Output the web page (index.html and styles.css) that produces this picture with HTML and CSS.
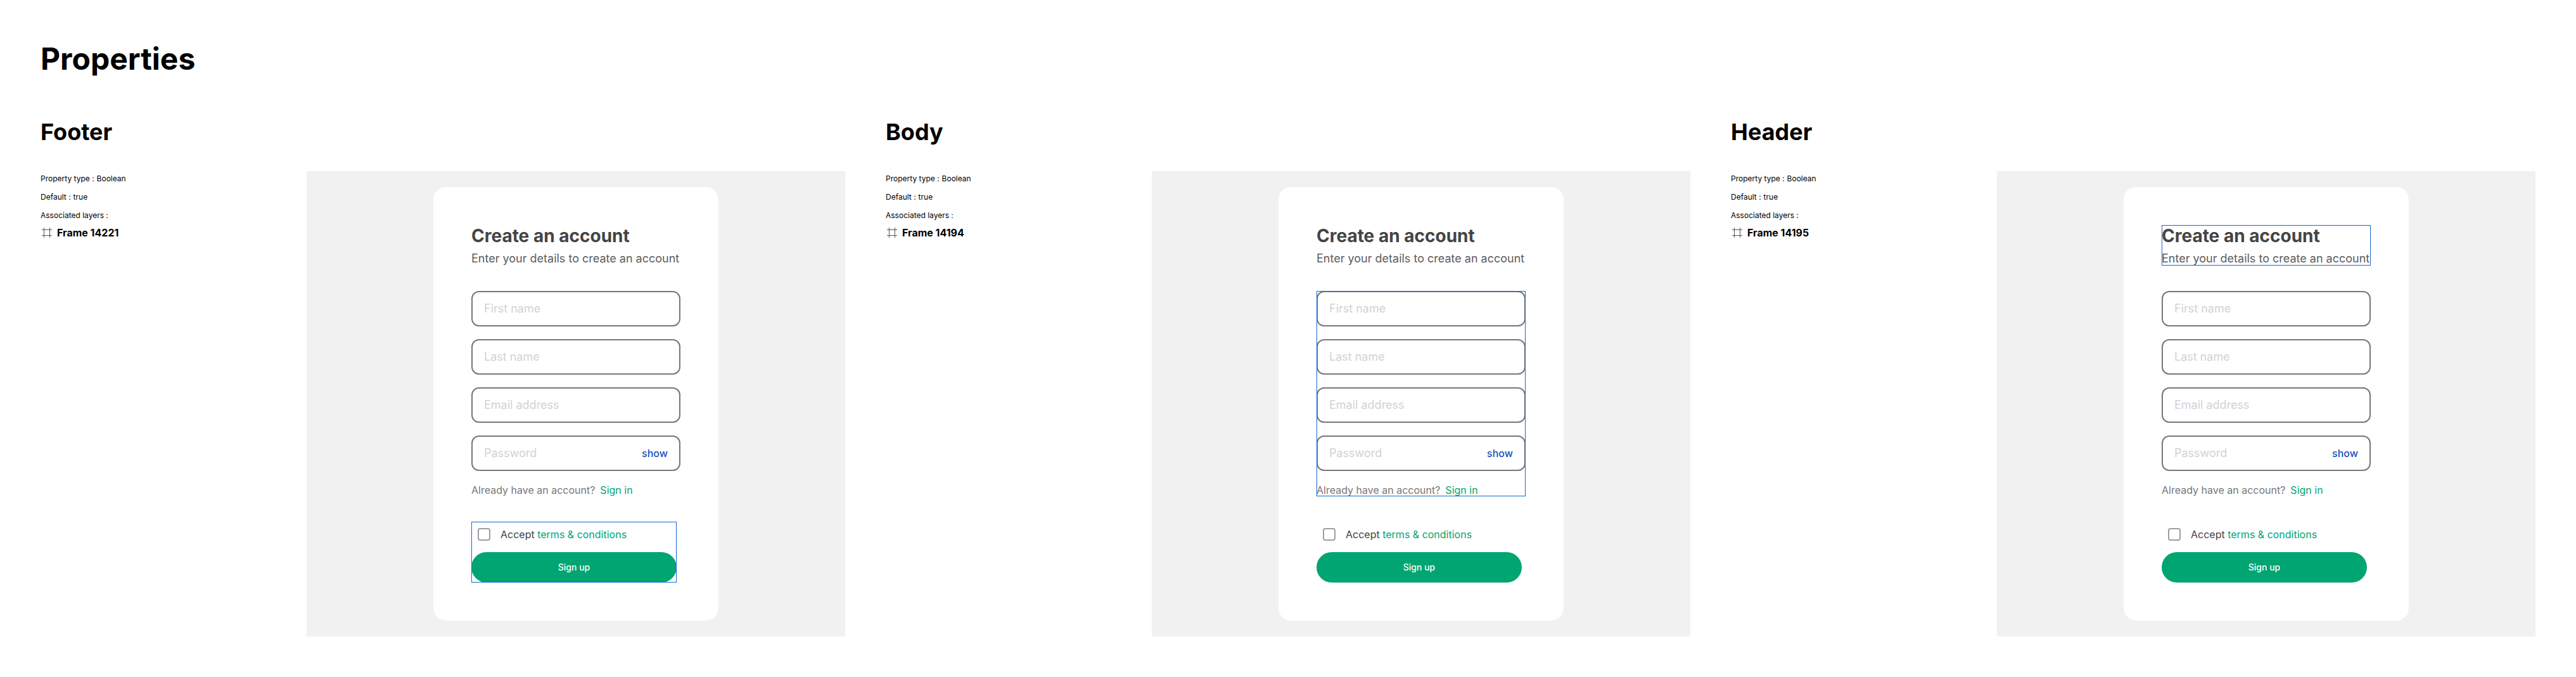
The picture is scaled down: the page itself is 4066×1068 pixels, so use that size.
FILE: index.html
```html
<!DOCTYPE html>
<html lang="en">
<head>
<meta charset="utf-8">
<meta name="viewport" content="width=device-width, initial-scale=1">
<title>Properties</title>
<link rel="stylesheet" href="styles.css">
</head>
<body>
<svg class="sprite" width="0" height="0" aria-hidden="true">
  <symbol id="frame" viewBox="0 0 16 16"><path d="M3.5 0v16M12.5 0v16M0 3.5h16M0 12.5h16" fill="none" stroke="#555" stroke-width="1"/></symbol>
</svg>
<main class="page">
  <h1 class="page-title">Properties</h1>
  <div class="properties">

    <section class="property">
      <h2 class="property-name">Footer</h2>
      <div class="property-body">
        <div class="meta">
          <p class="meta-row"><span>Property type :</span><span>Boolean</span></p>
          <p class="meta-row"><span>Default :</span><span>true</span></p>
          <p class="meta-row">Associated layers :</p>
          <p class="layer"><svg class="layer-icon" aria-hidden="true"><use href="#frame"/></svg>Frame 14221</p>
        </div>
        <div class="preview">
          <form class="card">
            <header class="card-header">
              <h3 class="card-title">Create an account</h3>
              <p class="card-subtitle">Enter your details to create an account</p>
            </header>
            <div class="card-body">
              <div class="field"><input class="input" type="text" placeholder="First name" aria-label="First name"></div>
              <div class="field"><input class="input" type="text" placeholder="Last name" aria-label="Last name"></div>
              <div class="field"><input class="input" type="email" placeholder="Email address" aria-label="Email address"></div>
              <div class="field"><input class="input" type="password" placeholder="Password" aria-label="Password"><button class="show" type="button">show</button></div>
              <p class="signin"><span>Already have an account?</span><a class="link" href="#">Sign in</a></p>
            </div>
            <footer class="card-footer selected">
              <label class="terms"><input class="checkbox" type="checkbox"><span>Accept <a class="link" href="#">terms &amp; conditions</a></span></label>
              <button class="submit" type="submit">Sign up</button>
            </footer>
          </form>
        </div>
      </div>
    </section>

    <section class="property">
      <h2 class="property-name">Body</h2>
      <div class="property-body">
        <div class="meta">
          <p class="meta-row"><span>Property type :</span><span>Boolean</span></p>
          <p class="meta-row"><span>Default :</span><span>true</span></p>
          <p class="meta-row">Associated layers :</p>
          <p class="layer"><svg class="layer-icon" aria-hidden="true"><use href="#frame"/></svg>Frame 14194</p>
        </div>
        <div class="preview">
          <form class="card">
            <header class="card-header">
              <h3 class="card-title">Create an account</h3>
              <p class="card-subtitle">Enter your details to create an account</p>
            </header>
            <div class="card-body selected">
              <div class="field"><input class="input" type="text" placeholder="First name" aria-label="First name"></div>
              <div class="field"><input class="input" type="text" placeholder="Last name" aria-label="Last name"></div>
              <div class="field"><input class="input" type="email" placeholder="Email address" aria-label="Email address"></div>
              <div class="field"><input class="input" type="password" placeholder="Password" aria-label="Password"><button class="show" type="button">show</button></div>
              <p class="signin"><span>Already have an account?</span><a class="link" href="#">Sign in</a></p>
            </div>
            <footer class="card-footer">
              <label class="terms"><input class="checkbox" type="checkbox"><span>Accept <a class="link" href="#">terms &amp; conditions</a></span></label>
              <button class="submit" type="submit">Sign up</button>
            </footer>
          </form>
        </div>
      </div>
    </section>

    <section class="property">
      <h2 class="property-name">Header</h2>
      <div class="property-body">
        <div class="meta">
          <p class="meta-row"><span>Property type :</span><span>Boolean</span></p>
          <p class="meta-row"><span>Default :</span><span>true</span></p>
          <p class="meta-row">Associated layers :</p>
          <p class="layer"><svg class="layer-icon" aria-hidden="true"><use href="#frame"/></svg>Frame 14195</p>
        </div>
        <div class="preview">
          <form class="card">
            <header class="card-header selected">
              <h3 class="card-title">Create an account</h3>
              <p class="card-subtitle">Enter your details to create an account</p>
            </header>
            <div class="card-body">
              <div class="field"><input class="input" type="text" placeholder="First name" aria-label="First name"></div>
              <div class="field"><input class="input" type="text" placeholder="Last name" aria-label="Last name"></div>
              <div class="field"><input class="input" type="email" placeholder="Email address" aria-label="Email address"></div>
              <div class="field"><input class="input" type="password" placeholder="Password" aria-label="Password"><button class="show" type="button">show</button></div>
              <p class="signin"><span>Already have an account?</span><a class="link" href="#">Sign in</a></p>
            </div>
            <footer class="card-footer">
              <label class="terms"><input class="checkbox" type="checkbox"><span>Accept <a class="link" href="#">terms &amp; conditions</a></span></label>
              <button class="submit" type="submit">Sign up</button>
            </footer>
          </form>
        </div>
      </div>
    </section>

  </div>
</main>
</body>
</html>
```

FILE: styles.css
```css
*,
*::before,
*::after {
  box-sizing: border-box;
}

body {
  margin: 0;
  background: #fff;
  color: #000;
  font-family: Inter, "Liberation Sans", sans-serif;
}

h1,
h2,
h3,
p {
  margin: 0;
}

.sprite {
  position: absolute;
}

.page {
  display: flex;
  flex-direction: column;
  gap: 64px;
  padding: 64px;
}

.page-title {
  font-size: 48px;
  line-height: 58px;
  font-weight: 700;
}

.properties {
  display: grid;
  grid-template-columns: repeat(3, minmax(0, 1fr));
  gap: 64px;
}

.property {
  display: flex;
  flex-direction: column;
  gap: 40px;
}

.property-name {
  font-size: 36px;
  line-height: 44px;
  font-weight: 700;
}

.property-body {
  display: grid;
  grid-template-columns: 420px minmax(0, 1fr);
}

/* Property details */

.meta {
  display: flex;
  flex-direction: column;
  gap: 14px;
  padding-top: 4px;
}

.meta-row {
  display: flex;
  gap: 4px;
  font-size: 12px;
  line-height: 15px;
}

.layer {
  display: flex;
  align-items: center;
  gap: 8px;
  padding-left: 2px;
  margin-top: -4px;
  font-size: 16px;
  line-height: 20px;
  font-weight: 700;
}

.layer-icon {
  width: 16px;
  height: 16px;
}

/* Component preview */

.preview {
  display: flex;
  justify-content: center;
  padding: 25px;
  background: #f1f1f1;
}

.card {
  display: flex;
  flex-direction: column;
  gap: 40px;
  width: 450px;
  max-width: 100%;
  padding: 60px;
  border-radius: 20px;
  background: #fff;
}

.card-header {
  display: flex;
  flex-direction: column;
  gap: 8px;
}

.card-title {
  color: #444;
  font-size: 28px;
  line-height: 34px;
  font-weight: 700;
}

.card-subtitle {
  color: #5c5c5c;
  font-size: 18px;
  line-height: 22px;
  white-space: nowrap;
}

.card-body {
  display: flex;
  flex-direction: column;
  gap: 20px;
}

.field {
  display: flex;
  align-items: center;
  height: 56px;
  padding: 0 18px;
  border: 2px solid #777;
  border-radius: 12px;
}

.input {
  flex: 1;
  min-width: 0;
  padding: 0;
  border: 0;
  outline: 0;
  background: none;
  color: #444;
  font: inherit;
  font-size: 18px;
  line-height: 22px;
}

.input::placeholder {
  color: #d2d2d2;
  opacity: 1;
}

.show {
  padding: 0;
  border: 0;
  background: none;
  color: #1850bc;
  font: inherit;
  font-size: 16px;
  line-height: 20px;
  font-weight: 500;
}

.signin {
  display: flex;
  gap: 8px;
  color: #777;
  font-size: 16px;
  line-height: 20px;
}

.link {
  color: #00a571;
  text-decoration: none;
}

.card-footer {
  display: flex;
  flex-direction: column;
  gap: 8px;
  margin-right: 6px;
}

.terms {
  display: flex;
  align-items: center;
  gap: 16px;
  padding: 10px;
  color: #444;
  font-size: 16px;
  line-height: 20px;
}

.checkbox {
  appearance: none;
  width: 20px;
  height: 20px;
  margin: 0;
  border: 2px solid #9e9e9e;
  border-radius: 4px;
}

.checkbox:checked {
  background: #00a571;
}

.submit {
  height: 48px;
  padding: 0;
  border: 0;
  border-radius: 24px;
  background: #00a571;
  color: #fff;
  font: inherit;
  font-size: 14px;
  line-height: 20px;
  font-weight: 500;
}

/* Outline drawn over the layer a property controls */

.selected {
  position: relative;
}

.selected::after {
  content: "";
  position: absolute;
  inset: 0;
  border: 1px solid #1269d3;
  pointer-events: none;
}

@media (max-width: 3000px) {
  .properties {
    grid-template-columns: minmax(0, 1fr);
  }
}

@media (max-width: 1000px) {
  .property-body {
    grid-template-columns: minmax(0, 1fr);
    gap: 40px;
  }
}
```
